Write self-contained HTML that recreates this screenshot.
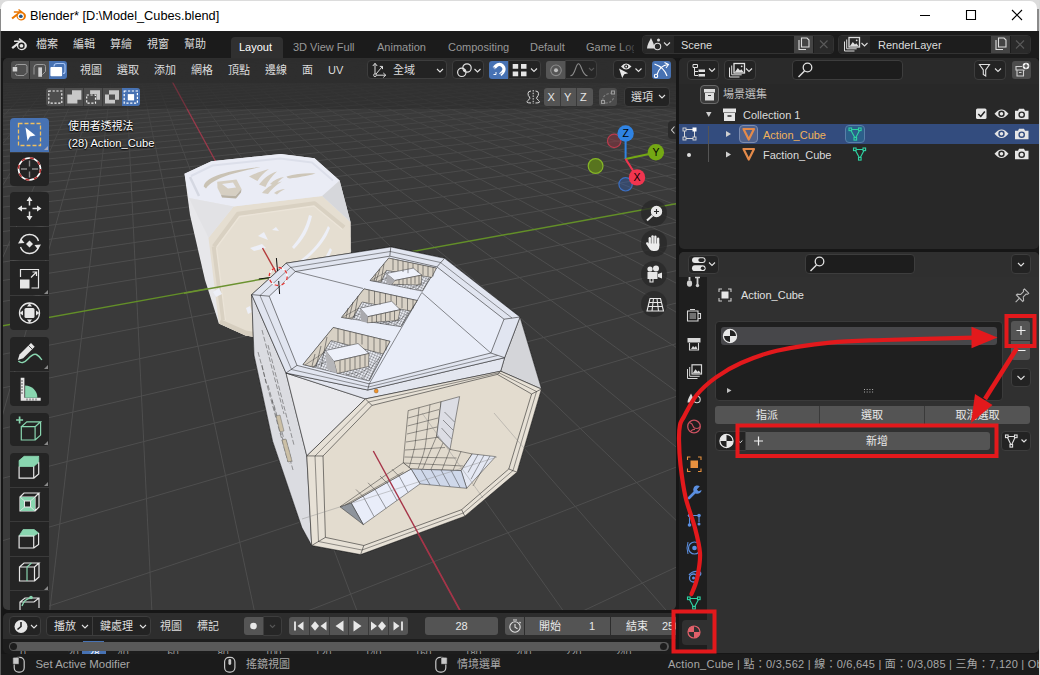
<!DOCTYPE html>
<html lang="zh-Hant"><head><meta charset="utf-8"><title>Blender</title>
<style>
*{box-sizing:border-box;margin:0;padding:0}
html,body{width:1040px;height:675px;overflow:hidden;background:#161616}
body{position:relative;font-family:"Liberation Sans","Noto Sans CJK TC",sans-serif;font-size:11px;color:#e0e0e0;line-height:1}
.abs{position:absolute}
.t{position:absolute;white-space:nowrap;color:#dcdcdc;font-size:11px;line-height:14px}
.cj{font-size:11px}
svg{position:absolute;overflow:visible}
#title{left:1px;top:1px;width:1036px;height:30px;background:#fff;border-radius:7px 7px 0 0}
#topbar{left:0;top:31px;width:1040px;height:27px;background:#1b1b1b}
#vp{left:3px;top:57.500px;width:673px;height:552.500px;background:#3a3a3a;overflow:hidden;border-radius:5px}
#vphead{left:0;top:0;width:673px;height:26px;background:rgba(40,40,40,.72)}
#tl{left:3px;top:613px;width:673px;height:41px;background:#1d1d1d;overflow:hidden;border-radius:5px}
#tlhead{left:0;top:0;width:673px;height:25px;background:#2e2e2e}
#status{left:0;top:654px;width:1040px;height:21px;background:#1b1b1b}
#outl{left:679px;top:58px;width:360px;height:190.500px;background:#282828;overflow:hidden;border-radius:5px}
#outlheadx{left:0;top:0;width:356px;height:25px;background:#2e2e2e}
#props{left:679px;top:252px;width:360px;height:401px;background:#303030;overflow:hidden;border-radius:5px}
#propshead{left:0;top:0;width:356px;height:26px;background:#2e2e2e}
#ptabs{left:0;top:26px;width:28px;height:374px;background:#1d1d1d}
.btn{position:absolute;background:#545454;border-radius:3px}
.fld{position:absolute;background:#1d1d1d;border:1px solid #3d3d3d;border-radius:4px}
.tool{position:absolute;left:6px;width:34px;height:34px;background:rgba(34,34,34,.9);}
</style></head><body>
<!-- TITLE BAR -->
<div class="abs" style="left:0;top:0;width:1040px;height:9px;background:#dcdcdc"></div>
<div class="abs" style="left:0;top:9px;width:1040px;height:22px;background:#8a8a8a"></div>
<div class="abs" id="title">
<svg style="left:8.500px;top:6.500px" width="16.500" height="14.700" viewBox="0 0 18 16"><path d="M1.5 10.500L8.500 5.200H4.200V3.600H10.600L8.800 2.200L9.800 1L16 5.800C17.600 7.200 17.800 9.600 16.600 11.400C15 13.600 11.600 14.200 9.200 12.600C7.900 11.700 7.200 10.400 7.100 9L3 12.200Z" fill="#ea7600"/><circle cx="11.800" cy="9" r="3.300" fill="#fff"/><circle cx="11.800" cy="9" r="2" fill="#265787"/></svg>
<div class="t" style="left:29px;top:7px;font-size:12.750px;color:#000;line-height:16px">Blender* [D:\Model_Cubes.blend]</div>
<svg style="left:918px;top:8px" width="110" height="14" viewBox="0 0 110 14" fill="none" stroke="#000" stroke-width="1.100"><path d="M1 6.500h10M47.500 1.500h9v9h-9zM93 1l10 10M103 1l-10 10"/></svg>
</div>
<div class="abs" style="left:0;top:31px;width:1px;height:644px;background:#5a5a5a;z-index:5"></div>
<div class="abs" style="left:1039px;top:0;width:1px;height:675px;background:#dadada;z-index:5"></div>
<!-- TOP BAR -->
<div class="abs" id="topbar">
<svg style="left:10px;top:5.500px" width="17.500" height="15.600" viewBox="0 0 18 16"><path d="M1.500 10.500L8.500 5.200H4.200V3.600H10.600L8.800 2.200L9.800 1L16 5.800C17.600 7.200 17.800 9.600 16.600 11.400C15 13.600 11.600 14.200 9.200 12.600C7.900 11.700 7.200 10.400 7.100 9L3 12.200Z" fill="#e4e4e4"/><circle cx="11.800" cy="9" r="3.300" fill="#1b1b1b"/><circle cx="11.800" cy="9" r="1.900" fill="#e4e4e4"/></svg>
<div class="t cj" style="left:36px;top:6px">檔案</div>
<div class="t cj" style="left:73px;top:6px">編輯</div>
<div class="t cj" style="left:110px;top:6px">算繪</div>
<div class="t cj" style="left:147px;top:6px">視窗</div>
<div class="t cj" style="left:184px;top:6px">幫助</div>
<div class="abs" style="left:231px;top:6px;width:52px;height:21px;background:#303030;border-radius:4px 4px 0 0"></div>
<div class="t" style="left:239px;top:9px;color:#fff">Layout</div>
<div class="t" style="left:293px;top:9px;color:#989898">3D View Full</div>
<div class="t" style="left:377px;top:9px;color:#989898">Animation</div>
<div class="t" style="left:448px;top:9px;color:#989898">Compositing</div>
<div class="t" style="left:530px;top:9px;color:#989898">Default</div>
<div class="t" style="left:586px;top:9px;color:#989898;width:48px;overflow:hidden">Game Logic</div>
<div class="abs" style="left:618px;top:4px;width:22px;height:22px;background:linear-gradient(90deg,rgba(27,27,27,0),#1b1b1b)"></div>
<!-- scene widget -->
<div class="abs" style="left:642px;top:3.500px;width:192px;height:19.500px;background:#1d1d1d;border:1px solid #333;border-radius:4px"></div>
<div class="abs" style="left:643px;top:4.500px;width:30.500px;height:17.500px;background:#282828;border-radius:3px 0 0 3px"></div>
<div class="abs" style="left:794px;top:4.500px;width:19px;height:17.500px;background:#444"></div>
<div class="abs" style="left:814px;top:4.500px;width:19px;height:17.500px;background:#2a2a2a;border-radius:0 3px 3px 0"></div>
<div class="t" style="left:681px;top:6.500px">Scene</div>
<div class="abs" style="left:838px;top:4px;width:193px;height:19px;background:#1d1d1d;border:1px solid #333;border-radius:4px"></div>
<div class="abs" style="left:839px;top:5px;width:31px;height:17px;background:#282828;border-radius:3px 0 0 3px"></div>
<div class="abs" style="left:991px;top:5px;width:19px;height:17px;background:#444"></div>
<div class="abs" style="left:1011px;top:5px;width:19px;height:17px;background:#2a2a2a;border-radius:0 3px 3px 0"></div>
<div class="t" style="left:878px;top:6.500px">RenderLayer</div>
<svg style="left:0;top:0" width="1040" height="27" viewBox="0 0 1040 27" fill="none" stroke="#dcdcdc" stroke-width="1.100">
<!-- scene icon -->
<path d="M647 17.500c0-3.500 2.200-7 4-10.500c1.800 3.500 3.500 7 3.500 10.500z" fill="#dcdcdc" stroke="none"/><circle cx="657.500" cy="15.500" r="3.200"/><circle cx="658.500" cy="9" r="1.500" fill="#dcdcdc" stroke="none"/><path d="M664 11.500l3 3l3-3"/>
<!-- copy icons -->
<path d="M799 9v9.500h7M801.500 7h5.500l2 2v7h-7.500z"/>
<path d="M996 9v9.500h7M998.500 7h5.500l2 2v7h-7.500z"/>
<path d="M820 9.500l7.500 7.500M827.500 9.500l-7.500 7.500" stroke="#5a5a5a"/>
<path d="M1016 9.500l8 8M1024 9.500l-8 8" stroke="#5a5a5a"/>
<!-- render layer icon -->
<path d="M844.500 10.500v9.500h10M846.700 8.500v9.300h10" stroke-width="1"/><rect x="849" y="6.500" width="10.500" height="9.500" fill="#282828" stroke="#dcdcdc" stroke-width="1.300"/><path d="M849.800 15.300l3-4.300l2.200 2.600l1.300-1.300l2.400 3z" fill="#dcdcdc" stroke="none"/><circle cx="856.700" cy="9.300" r="0.900" fill="#dcdcdc" stroke="none"/>
<path d="M861.500 12l3 3l3-3"/>
</svg>
</div>
<div class="abs" id="vp">
<svg style="left:-3px;top:-57.500px" width="1040" height="675" viewBox="0 0 1040 675">
<defs><linearGradient id="gf" x1="0" y1="58" x2="0" y2="330" gradientUnits="userSpaceOnUse"><stop offset="0" stop-color="#fff" stop-opacity="0"/><stop offset="0.08" stop-color="#fff" stop-opacity="0.05"/><stop offset="0.2" stop-color="#fff" stop-opacity="0.5"/><stop offset="0.4" stop-color="#fff" stop-opacity="0.85"/><stop offset="0.7" stop-color="#fff" stop-opacity="1"/></linearGradient><mask id="gm" maskUnits="userSpaceOnUse" x="0" y="0" width="1040" height="675"><rect x="0" y="0" width="1040" height="675" fill="url(#gf)"/></mask><clipPath id="axc"><rect x="0" y="82.5" width="1040" height="600"/></clipPath></defs>
<g mask="url(#gm)"><path d="M-107557.5 12366.9L27.7 -0.3M-105658.6 12352.3L29.4 -0.3M-103759.7 12337.7L31.0 -0.3M-101860.8 12323.2L32.7 -0.4M-99961.8 12308.6L34.3 -0.4M-98062.9 12294.1L36.0 -0.4M-96164.0 12279.5L37.7 -0.4M-94265.1 12265.0L39.3 -0.4M-92366.2 12250.4L41.0 -0.4M-90467.3 12235.8L42.6 -0.4M-88568.4 12221.3L44.3 -0.4M-86669.5 12206.7L46.0 -0.5M-84770.6 12192.2L47.6 -0.5M-82871.7 12177.6L49.3 -0.5M-80972.8 12163.1L50.9 -0.5M-79073.9 12148.5L52.6 -0.5M-77175.0 12133.9L54.3 -0.5M-75276.1 12119.4L55.9 -0.5M-73377.2 12104.8L57.6 -0.5M-71478.3 12090.3L59.2 -0.6M-69579.4 12075.7L60.9 -0.6M-67680.5 12061.2L62.6 -0.6M-65781.6 12046.6L64.2 -0.6M-63882.7 12032.0L65.9 -0.6M-61983.8 12017.5L67.5 -0.6M-60084.9 12002.9L69.2 -0.6M-58186.0 11988.4L70.9 -0.6M-56287.0 11973.8L72.5 -0.7M-54388.1 11959.3L74.2 -0.7M-52489.2 11944.7L75.8 -0.7M-50590.3 11930.1L77.5 -0.7M-48691.4 11915.6L79.2 -0.7M-46792.5 11901.0L80.8 -0.7M-44893.6 11886.5L82.5 -0.7M-42994.7 11871.9L84.1 -0.7M-41095.8 11857.4L85.8 -0.8M-39196.9 11842.8L87.5 -0.8M-37298.0 11828.3L89.1 -0.8M-35399.1 11813.7L90.8 -0.8M-33500.2 11799.1L92.4 -0.8M-31601.3 11784.6L94.1 -0.8M-29702.4 11770.0L95.8 -0.8M-27803.5 11755.5L97.4 -0.8M-25904.6 11740.9L99.1 -0.9M-24005.7 11726.4L100.7 -0.9M-22106.8 11711.8L102.4 -0.9M-20207.9 11697.2L104.1 -0.9M-18309.0 11682.7L105.7 -0.9M-16410.1 11668.1L107.4 -0.9M-14511.2 11653.6L109.0 -0.9M-12612.2 11639.0L110.7 -1.0M-10713.3 11624.5L112.4 -1.0M-8814.4 11609.9L114.0 -1.0M-6915.5 11595.3L115.7 -1.0M-5016.6 11580.8L117.3 -1.0M-3117.7 11566.2L119.0 -1.0M-1218.8 11551.7L120.7 -1.0M680.1 11537.1L122.3 -1.0M2579.0 11522.6L124.0 -1.1M4477.9 11508.0L125.6 -1.1M8275.7 11478.9L129.0 -1.1M10174.6 11464.3L130.6 -1.1M12073.5 11449.8L132.3 -1.1M13972.4 11435.2L133.9 -1.1M15871.3 11420.7L135.6 -1.1M17770.2 11406.1L137.3 -1.2M19669.1 11391.5L138.9 -1.2M21568.0 11377.0L140.6 -1.2M23466.9 11362.4L142.2 -1.2M25365.8 11347.9L143.9 -1.2M27264.7 11333.3L145.6 -1.2M29163.6 11318.8L147.2 -1.2M31062.6 11304.2L148.9 -1.2M32961.5 11289.6L150.5 -1.3M34860.4 11275.1L152.2 -1.3M36759.3 11260.5L153.9 -1.3M38658.2 11246.0L155.5 -1.3M40557.1 11231.4L157.2 -1.3M42456.0 11216.9L158.8 -1.3M44354.9 11202.3L160.5 -1.3M46253.8 11187.8L162.2 -1.3M48152.7 11173.2L163.8 -1.4M50051.6 11158.6L165.5 -1.4M51950.5 11144.1L167.1 -1.4M53849.4 11129.5L168.8 -1.4M55748.3 11115.0L170.5 -1.4M57647.2 11100.4L172.1 -1.4M59546.1 11085.9L173.8 -1.4M61445.0 11071.3L175.4 -1.4M63343.9 11056.7L177.1 -1.5M65242.8 11042.2L178.8 -1.5M67141.7 11027.6L180.4 -1.5M69040.6 11013.1L182.1 -1.5M70939.5 10998.5L183.8 -1.5M72838.4 10984.0L185.4 -1.5M74737.4 10969.4L187.1 -1.5M76636.3 10954.8L188.7 -1.5M78535.2 10940.3L190.4 -1.6M80434.1 10925.7L192.1 -1.6M82333.0 10911.2L193.7 -1.6M84231.9 10896.6L195.4 -1.6M86130.8 10882.1L197.0 -1.6M88029.7 10867.5L198.7 -1.6M89928.6 10852.9L200.4 -1.6M91827.5 10838.4L202.0 -1.7M93726.4 10823.8L203.7 -1.7M95625.3 10809.3L205.3 -1.7M97524.2 10794.7L207.0 -1.7M99423.1 10780.2L208.7 -1.7M101322.0 10765.6L210.3 -1.7M103220.9 10751.0L212.0 -1.7M105119.8 10736.5L213.6 -1.7M107018.7 10721.9L215.3 -1.8M108917.6 10707.4L217.0 -1.8M110816.5 10692.8L218.6 -1.8M112715.4 10678.3L220.3 -1.8M114614.3 10663.7L221.9 -1.8M116513.2 10649.2L223.6 -1.8M118412.2 10634.6L225.3 -1.8M120311.1 10620.0L226.9 -1.8M122210.0 10605.5L228.6 -1.9M124108.9 10590.9L230.2 -1.9M126007.8 10576.4L231.9 -1.9M127906.7 10561.8L233.6 -1.9M129805.6 10547.3L235.2 -1.9M131704.5 10532.7L236.9 -1.9M133603.4 10518.1L238.5 -1.9M135502.3 10503.6L240.2 -1.9M137401.2 10489.0L241.9 -2.0M-1454605.9 42694.1L1088.0 -0.1M-1440440.1 42585.5L1096.2 -0.2M-1426274.3 42476.9L1104.5 -0.3M-1412108.5 42368.3L1112.7 -0.3M-1397942.6 42259.7L1121.0 -0.4M-1383776.8 42151.1L1129.2 -0.5M-1369611.0 42042.5L1137.5 -0.5M-1355445.2 41933.9L1145.8 -0.6M-1341279.3 41825.3L1154.0 -0.7M-1327113.5 41716.7L1162.3 -0.7M-1312947.7 41608.1L1170.5 -0.8M-1298781.9 41499.5L1178.8 -0.8M-1284616.0 41391.0L1187.1 -0.9M-1270450.2 41282.4L1195.3 -1.0M-1256284.4 41173.8L1203.6 -1.0M-1242118.6 41065.2L1211.8 -1.1M-1227952.7 40956.6L1220.1 -1.2M-1213786.9 40848.0L1228.3 -1.2M-1199621.1 40739.4L1236.6 -1.3M-1185455.3 40630.8L1244.9 -1.4M-1171289.4 40522.2L1253.1 -1.4M-1157123.6 40413.6L1261.4 -1.5M-1142957.8 40305.0L1269.6 -1.5M-1128792.0 40196.4L1277.9 -1.6M-1114626.1 40087.8L1286.2 -1.7M-1100460.3 39979.2L1294.4 -1.7M-1086294.5 39870.6L1302.7 -1.8M-1072128.7 39762.0L1310.9 -1.9M-1057962.8 39653.5L1319.2 -1.9M-1043797.0 39544.9L1327.4 -2.0M-1029631.2 39436.3L1335.7 -2.0M-1015465.4 39327.7L1344.0 -2.1M-1001299.5 39219.1L1352.2 -2.2M-987133.7 39110.5L1360.5 -2.2M-972967.9 39001.9L1368.7 -2.3M-958802.1 38893.3L1377.0 -2.4M-944636.2 38784.7L1385.3 -2.4M-930470.4 38676.1L1393.5 -2.5M-916304.6 38567.5L1401.8 -2.6M-902138.8 38458.9L1410.0 -2.6M-887972.9 38350.3L1418.3 -2.7M-873807.1 38241.7L1426.6 -2.7M-859641.3 38133.1L1434.8 -2.8M-845475.5 38024.5L1443.1 -2.9M-831309.6 37916.0L1451.3 -2.9M-817143.8 37807.4L1459.6 -3.0M-802978.0 37698.8L1467.8 -3.1M-788812.2 37590.2L1476.1 -3.1M-774646.3 37481.6L1484.4 -3.2M-760480.5 37373.0L1492.6 -3.2M-746314.7 37264.4L1500.9 -3.3M-732148.9 37155.8L1509.1 -3.4M-717983.0 37047.2L1517.4 -3.4M-703817.2 36938.6L1525.7 -3.5M-689651.4 36830.0L1533.9 -3.6M-675485.6 36721.4L1542.2 -3.6M-661319.7 36612.8L1550.4 -3.7M-647153.9 36504.2L1558.7 -3.8M-632988.1 36395.6L1566.9 -3.8M-618822.3 36287.1L1575.2 -3.9M-604656.4 36178.5L1583.5 -3.9M-590490.6 36069.9L1591.7 -4.0M-576324.8 35961.3L1600.0 -4.1M-562159.0 35852.7L1608.2 -4.1M-547993.1 35744.1L1616.5 -4.2M-533827.3 35635.5L1624.8 -4.3M-519661.5 35526.9L1633.0 -4.3M-505495.7 35418.3L1641.3 -4.4M-491329.8 35309.7L1649.5 -4.5M-477164.0 35201.1L1657.8 -4.5M-462998.2 35092.5L1666.1 -4.6M-448832.4 34983.9L1674.3 -4.6M-434666.6 34875.3L1682.6 -4.7M-420500.7 34766.7L1690.8 -4.8M-406334.9 34658.1L1699.1 -4.8M-392169.1 34549.6L1707.3 -4.9M-378003.3 34441.0L1715.6 -5.0M-363837.4 34332.4L1723.9 -5.0M-349671.6 34223.8L1732.1 -5.1M-335505.8 34115.2L1740.4 -5.1M-321340.0 34006.6L1748.6 -5.2M-307174.1 33898.0L1756.9 -5.3M-293008.3 33789.4L1765.2 -5.3M-278842.5 33680.8L1773.4 -5.4M-264676.7 33572.2L1781.7 -5.5M-250510.8 33463.6L1789.9 -5.5M-236345.0 33355.0L1798.2 -5.6M-222179.2 33246.4L1806.4 -5.7M-208013.4 33137.8L1814.7 -5.7M-193847.5 33029.2L1823.0 -5.8M-165515.9 32812.1L1839.5 -5.9M-151350.1 32703.5L1847.7 -6.0M-137184.2 32594.9L1856.0 -6.0M-123018.4 32486.3L1864.3 -6.1M-108852.6 32377.7L1872.5 -6.2M-94686.8 32269.1L1880.8 -6.2M-80520.9 32160.5L1889.0 -6.3M-66355.1 32051.9L1897.3 -6.4M-52189.3 31943.3L1905.6 -6.4M-38023.5 31834.7L1913.8 -6.5M-23857.6 31726.1L1922.1 -6.5M-9691.8 31617.5L1930.3 -6.6M4474.0 31508.9L1938.6 -6.7" stroke="#4e4e4e" stroke-width="1" fill="none"/></g>
<path d="M7419.3 13410.9L127.1 -1.4" stroke="#98394a" stroke-width="1.3" clip-path="url(#axc)" fill="none"/>
<path d="M-209951.5 38411.6L1837.5 -7.0" stroke="#638f28" stroke-width="1.4" fill="none"/>
<!-- back cube -->
<g stroke-linejoin="round">
<polygon points="184.5,173.7 211.4,161.2 280.8,153.9 314.5,158.3 339.6,180.5 350.5,222 351,300 300,345 245.5,335.4 218.9,323.6 205,280 190,215" fill="#e7e7ea"/>
<polygon points="208.5,237.7 233.6,206.5 322.2,195.9 350.5,222 351,300 300,345 245.5,335.4 218.9,323.6" fill="#e5ded1"/>
<polygon points="184.5,173.7 211.4,161.2 280.8,153.9 314.5,158.3 339.6,180.5 322.2,195.9 233.6,206.5 189,198" fill="#eaecf5"/>
<polygon points="339.6,180.5 322.2,195.9 350.5,222" fill="#d6d7db"/>
<polygon points="189,198 233.6,206.5 208.5,237.7" fill="#e2e2e5"/>
<polyline points="214,246.500 238,214 314.500,203.500 344,227.500" fill="none" stroke="#d9d1c2" stroke-width="4.600"/><polyline points="216.500,247.500 239.500,216.500 314,206 342.500,229.500" fill="none" stroke="#ebe4d8" stroke-width="1.300"/>
<polyline points="214,246.500 223.500,320" fill="none" stroke="#d9d1c2" stroke-width="4.600"/><polyline points="216.500,247.500 225.500,320" fill="none" stroke="#ebe4d8" stroke-width="1.300"/><polygon points="218.900,323.600 245.500,335.400 300,345 300,340 246,330.500 221,319.500" fill="#d6cebf"/>
<polyline points="191,176 212.5,165.5 280,158.5 312,162.5 333,180.5" fill="none" stroke="#dcdfea" stroke-width="2"/>
<polyline points="190,177 199,196" fill="none" stroke="#d5d8e2" stroke-width="2.5"/>
<!-- emblem top -->
<path d="M203.700 186.500C205 178 222 171 260.600 167C238 172 214 177 206 188.500Z" fill="#c9c2b4"/>
<path d="M217.200 181.800L236.500 179.500L241.500 189L235.500 196L221 195L217.500 188Z" fill="#d6cfc2"/>
<path d="M222 184L233 182.500L236 187.500L228 188.500Z" fill="#eaecf5"/>
<path d="M221 195L235.500 196L241.500 189L241 192.500L236 198.500L222 197.500Z" fill="#b9b2a4"/>
<path d="M249 176.500C256 173 263 170.500 269 169C264 172.500 260 176.500 257.500 181ZM259 184.500C264 178 270 173.500 277 171.500C272 176 268 181 265.500 187ZM262 193C267 187 274 183 282 181.500C276 185 271 189.500 268 194ZM270 184C274 180 279 177.500 284 177C280 179.500 277 182.500 275 186ZM274 193C278 190 282 189 285 189C282 190.500 279 192.500 277 194.500Z" fill="#d3ccbf"/>
<path d="M286.500 176.500C296 173.500 307 173 315.500 173.500C307 176 297 177.500 290 178.500Q287 178.500 286.500 176.500Z" fill="#cdc6b8"/>
<!-- emblem front -->
<path d="M292 247C300 238 306 228 309 215L312 216C309 230 303 240 294 249ZM298 262C312 252 322 240 328 226L330 228C325 242 314 254 300 264ZM296 282C312 274 324 262 330 248L332 250C326 266 312 278 298 285Z" fill="#edeff7"/>
<path d="M250 248L262 244L266 248L254 251ZM258 236L264 232L268 240ZM272 230L276 227L279 231Z" fill="#edeff7"/>
<path d="M213 292L219 288L222 294L216 297ZM246 308L250 306 252 312 248 314Z" fill="#edeff7"/>
</g>
<!-- axis lines over back cube -->
<path d="M262.5 248L277 274" stroke="#b33a3a" stroke-width="1.4" fill="none"/>
<path d="M184 293.200L270 277.700" stroke="#6b9230" stroke-width="1.400" fill="none"/>
<!-- front cube -->
<g stroke="#1c1c1c" stroke-width="0.55" stroke-linejoin="round">
<polygon points="251.7,294.6 286.2,263.2 390.8,246.9 444.6,258.3 520,317 541.5,389 517,472 465,516 360.6,554.6 311.7,545.5 301.9,527.6 272.6,441.2 254,355" fill="#dddee3"/>
<polygon points="251.7,294.6 286,373 306.8,455.9 311.7,545.5 301.9,527.6 272.6,441.2 254,355" fill="#dbdce1"/>
<polygon points="286,373 365.4,398.9 306.8,455.9" fill="#e9e9ec"/>
<polygon points="520,317 541.5,389 500.7,371.2 504.6,357.7" fill="#d4d5d9"/>
<polygon points="286,373 367.7,390 504.6,357.7 500.7,371.2 365.4,398.9" fill="#e3e6ef"/>
<polygon points="251.7,294.6 286.2,263.2 390.8,246.9 444.6,258.3 520,317 504.6,357.7 367.7,390 286,373" fill="#e1e5f0"/>
<polygon points="269.2,296.2 295.4,271.5 389.8,256.2 436.9,266.9 504,319.2 490.8,353 369.2,383.8 297,365.4" fill="#e9edf8"/>
<path d="M251.7 294.6L269.2 296.2M286.2 263.2L295.4 271.5M390.8 246.9L389.8 256.2M444.6 258.3L436.9 266.9M520 317L504 319.2M504.6 357.7L490.8 353M367.7 390L369.2 383.8M286 373L297 365.4" fill="none"/>
<path d="M260 295.5L290.5 267.5L390.3 251.5L440.5 262.5L512 318M497.5 355.5L368.5 387L291.5 369.5L260 295.5" fill="none" stroke-width="0.45"/>
<!-- face edges on top -->
<path d="M295.4 271.5L363.1 288.5M421.8 292.5L490.8 353M421.8 292.5L369.2 383.8" fill="none" stroke-width="0.5"/>
<!-- front beige -->
<polygon points="365.4,398.9 500.7,371.2 541.4,389.1 517,472.2 464.8,516.2 360.6,554.6 311.7,545.5 306.8,455.9" fill="#e7e1d6"/>
<polygon points="372,405.4 497.4,374.4 531.6,394 508.8,469 461.6,509.7 363.8,545.5 325.4,537.4 323,456" fill="#e3dccf"/>
<path d="M365.4 398.9L372 405.4M500.7 371.2L497.4 374.4M541.4 389.1L531.6 394M517 472.2L508.8 469M464.8 516.2L461.6 509.7M360.6 554.6L363.8 545.5M311.7 545.5L325.4 537.4M306.8 455.9L323 456" fill="none"/>
<path d="M368.5 402L499 372.8L536.5 391.5L513 470.5L463.2 513L362 550L318.5 541.5L315 456Z" fill="none" stroke-width="0.45"/>
</g>

<!-- pockets on top face -->
<defs><pattern id="hx" width="2.600" height="2.600" patternUnits="userSpaceOnUse" patternTransform="rotate(24)"><rect width="2.600" height="2.600" fill="#e9ebf2"/><path d="M0 0H2.600M0 0V2.600" stroke="#26262a" stroke-width="0.500"/></pattern></defs>
<g stroke="#1c1c1c" stroke-width="0.45" stroke-linejoin="round">
<polygon points="388.7,258.1 436.4,268.1 422.6,291.2 370.2,280.5" fill="url(#hx)"/>
<polygon points="388.7,258.1 436.4,268.1 431.8,277.4 386.3,270.4 381,282 370.2,280.5" fill="#d8d1c5"/>
<polygon points="386.3,273.5 413.3,268.1 421.8,275.1 394.8,280.5" fill="#eef1fa"/>
<polygon points="394.8,280.5 421.8,275.1 421,285 391.7,284.3" fill="#d8d1c5"/>
<polygon points="386.3,273.5 394.8,280.5 391.7,284.3 386.3,283.5" fill="#a9a9ad" stroke="none"/>
<polygon points="364,288.9 417.2,300.5 401,326.7 341.6,317.4" fill="url(#hx)"/>
<polygon points="364,288.9 417.2,300.5 410.5,311 362,302 352,319 341.6,317.4" fill="#d8d1c5"/>
<polygon points="360.1,308.2 391.7,301.3 400.2,309.7 367.8,316.7" fill="#eef1fa"/>
<polygon points="367.8,316.7 400.2,309.7 398,320.5 367,322.8" fill="#d8d1c5"/>
<polygon points="360.1,308.2 367.8,316.7 367,322.8 360.9,321.3" fill="#a9a9ad" stroke="none"/>
<polygon points="333.2,327.5 390,341.3 369.2,381 303,364.5" fill="url(#hx)"/>
<polygon points="333.2,327.5 390,341.3 383,354 331,340.5 314,367.2 303,364.5" fill="#d8d1c5"/>
<polygon points="325.5,350.5 358,343.5 369,353.5 334,361.5" fill="#eef1fa"/>
<polygon points="334,361.5 369,353.5 368.5,366.5 337,373.5" fill="#d8d1c5"/>
<polygon points="325.5,350.5 334,361.5 337,373.5 327,369" fill="#b5b5b8" stroke="none"/>
</g>
<path d="M393 259v11M398 260v11M403 261v11M408 262.200v11M413 263.200v5M418 264.300v8M423 265.300v10M428 266.400v10M433 267.400v9M399 280v5M403 279.200v5.500M407 278.400v6M411 277.600v6.500M415 276.800v7M419 276v8M384 264l-3 17M380 269l-4 12M376 274l-2 7M369 290v12.500M374.500 291.200v12.500M380 292.400v12.500M385.500 293.600v9M391 294.800v6M396.500 296v9M402 297.200v11M407.500 298.400v12M413 299.600v9M372 316v6.500M376.500 315v7M381 314v7.500M385.500 313v8M390 312v8M394.500 311v9M358 296l-4 22M353 302l-4 16M348 308l-2 10M338 328.700v13M344 330.200v13.500M350 331.600v13.500M356 333.100v10M362 334.500v10M368 336v14M374 337.500v14.500M380 338.900v14.500M386 340.400v10M340 360.500v12M345 359.300v12M350 358.200v12M355 357v12M360 355.900v12M365 354.700v12M327 337l-6 30M321 346l-5 21M315 354l-3 12" stroke="#2a2a2a" stroke-width="0.5" fill="none"/>
<path d="M372 280l14-8M378 281l9-3M422 291l9-14M416 290l13-12M410 289l12-6M343 317l16-9M350 318l10-4M401 326l9-15M394 325.500l14-13M386 324.500l14-6M380 323.500l10-2M305 365l20-13M312 367l14-5M369 380l14-26M362 379l18-22M354 377l16-10M346 375l12-3" stroke="#333" stroke-width="0.4" fill="none"/>
<!-- Y recess -->
<g stroke="#1c1c1c" stroke-width="0.45" stroke-linejoin="round">
<polygon points="408.2,410.6 441.1,401.7 436.7,436.1 450,449.4 472.2,453.9 461.1,470.6 411.1,469 403.3,462.8 404.4,449.4" fill="#e1dacd"/>
<polygon points="441.1,401.7 459.6,396.6 450,449.4 436.7,436.1" fill="#dcdde4"/>
<polygon points="472.2,453.9 495.6,456.6 466.7,488.3 461.1,470.6" fill="#e4e8f3"/>
<polygon points="411.1,469 461.1,470.6 466.7,488.3 420,483.9" fill="#cfd8ea"/>
<polygon points="411.1,469 420,483.9 363.3,524.6 351.1,502.8" fill="#e9edf9"/>
<polygon points="340,506.800 351.1,502.8 363.3,524.6" fill="#8e949c"/>
<polygon points="403.3,462.8 411.1,469 351.1,502.8 340,506.8" fill="#e1dacd"/>
</g>
<path d="M408 418l31-8.500M407.500 426l30.500-8M407 434l30-7M406 442l33-5M405 450l40-2.500M404.500 457l52 1M403.500 463l60 3M419 407.600l-4 38q-2 10 -6 22M430 404.700l-4 36q-1 12 -8 28M436.700 436l-14 33M443 443l-12 26M450 449.400l-8 20.500M461 451.500l-8 19M444.500 412l10 10M443 420l10 10M441.500 428l10 11M478 454.500l-10 18M484 455.200l-13 24M490 456l-17 30M421 469.300l9 15.500M431 469.600l9 16M441 470l9 16.500M451 470.300l9 17M399 475.800l9 16.500M387 482.500l10 18M375 489.300l11 19M363 496l11 20.500M392 469.200l6.500 6.500M380 476l6.500 6.500M368 482.800l6.500 6.500M356 489.500l6.500 6.500M345.500 504.800l58-33" stroke="#2a2a2a" stroke-width="0.45" fill="none"/>
<circle cx="376.200" cy="391" r="2" fill="#f0932b" stroke="#7a4a10" stroke-width="0.4"/>
<path d="M373.300 451L460.500 611" stroke="#a63448" stroke-width="1.400" fill="none"/>
<path d="M262 330l22 84M258 352l30 110M268 345l26 100M272 400l8 30M280 430l10 34M286 440l6 22M262 365l4 18M268 385l5 18M274 405l5 18M282 432l5 18M288 452l5 18" stroke="#444" stroke-width="0.5" fill="none" stroke-dasharray="5 2"/>
<path d="M276 416l4 16l4-1l-4-16zM282 440l6 22l4-1l-6-22z" fill="#cbbfa6" stroke="#555" stroke-width="0.4"/>
<path d="M302 519L497 457M422 413L483 498M494 413L524 448" stroke="#8a8a8a" stroke-width="0.6" fill="none" opacity="0.7"/>
<g fill="none">
<circle cx="278.200" cy="276.500" r="9" stroke="#fff" stroke-width="1.300"/>
<circle cx="278.200" cy="276.500" r="9" stroke="#e03030" stroke-width="1.300" stroke-dasharray="3.534 3.534"/>
<path d="M276.400 258L277.500 271M278.700 281L279.600 294M258.800 279L270 277.600" stroke="#111" stroke-width="1"/>
</g>

</svg>
<!-- VIEWPORT OVERLAY UI (page coords via wrapper) -->
<div class="abs" style="left:-3px;top:-57.500px;width:1040px;height:675px">
<div class="abs" style="left:3px;top:57px;width:673px;height:26px;background:rgba(34,34,34,.5)"></div><div class="abs" style="left:3px;top:83px;width:673px;height:26px;background:rgba(34,34,34,.33)"></div>
<!-- mode buttons -->
<div class="abs" style="left:10.700px;top:60.700px;width:18.800px;height:18.500px;background:#4f4f4f;border-radius:3px 0 0 3px"></div>
<div class="abs" style="left:30px;top:60.700px;width:18.500px;height:18.500px;background:#4f4f4f"></div>
<div class="abs" style="left:49px;top:60.700px;width:18px;height:18.500px;background:#4772b3;border-radius:0 3px 3px 0"></div>
<div class="t cj" style="left:80px;top:63px">視圖</div>
<div class="t cj" style="left:117px;top:63px">選取</div>
<div class="t cj" style="left:154px;top:63px">添加</div>
<div class="t cj" style="left:191px;top:63px">網格</div>
<div class="t cj" style="left:228px;top:63px">頂點</div>
<div class="t cj" style="left:265px;top:63px">邊線</div>
<div class="t cj" style="left:302px;top:63px">面</div>
<div class="t" style="left:328px;top:63px">UV</div>
<div class="fld" style="left:367px;top:60px;width:80px;height:19px;background:#232323"></div>
<div class="t cj" style="left:393px;top:63px">全域</div>
<div class="fld" style="left:452px;top:60px;width:32px;height:19px;background:#232323"></div>
<div class="abs" style="left:489px;top:61px;width:19px;height:18px;background:#4772b3;border-radius:3px 0 0 3px"></div>
<div class="fld" style="left:508px;top:60px;width:33px;height:19px;background:#232323;border-radius:0 4px 4px 0"></div>
<div class="abs" style="left:546px;top:61px;width:19px;height:18px;background:#555;border-radius:3px 0 0 3px"></div>
<div class="fld" style="left:565px;top:60px;width:32px;height:19px;background:#262626;border-radius:0 4px 4px 0"></div>
<div class="fld" style="left:613px;top:60px;width:33px;height:19px;background:#232323"></div>
<div class="abs" style="left:652px;top:61px;width:19px;height:18px;background:#4772b3;border-radius:3px"></div>
<!-- row 2 -->
<div class="abs" style="left:46px;top:88px;width:94px;height:18px;background:#4e4e4e;border-radius:3px"></div>
<div class="abs" style="left:64px;top:88px;width:1px;height:18px;background:#3a3a3a"></div>
<div class="abs" style="left:83px;top:88px;width:1px;height:18px;background:#3a3a3a"></div>
<div class="abs" style="left:102px;top:88px;width:1px;height:18px;background:#3a3a3a"></div>
<div class="abs" style="left:121.500px;top:88px;width:18.500px;height:18px;background:#4772b3;border-radius:0 3px 3px 0"></div>
<div class="abs" style="left:544px;top:88px;width:48.500px;height:18px;background:#545454;border-radius:3px"></div>
<div class="abs" style="left:560px;top:88px;width:1px;height:18px;background:#3a3a3a"></div>
<div class="abs" style="left:576px;top:88px;width:1px;height:18px;background:#3a3a3a"></div>
<div class="t" style="left:547.500px;top:90px;color:#e8e8e8">X</div>
<div class="t" style="left:564px;top:90px;color:#e8e8e8">Y</div>
<div class="t" style="left:580px;top:90px;color:#e8e8e8">Z</div>
<div class="abs" style="left:599px;top:88px;width:18px;height:18px;background:#4c4c4c;border-radius:3px"></div>
<div class="fld" style="left:624px;top:87px;width:46px;height:20px;background:#232323"></div>
<div class="t cj" style="left:631px;top:90px">選項</div>
<!-- toolbar -->
<div class="abs" style="left:10px;top:118px;width:39px;height:33.500px;background:#4772b3;border-radius:4px 4px 0 0"></div>
<div class="abs" style="left:10px;top:152.500px;width:39px;height:33px;background:#242424;border-radius:0 0 4px 4px"></div>
<div class="abs" style="left:10px;top:192px;width:39px;height:33.500px;background:#242424;border-radius:4px 4px 0 0"></div>
<div class="abs" style="left:10px;top:226.500px;width:39px;height:33.500px;background:#242424"></div>
<div class="abs" style="left:10px;top:261px;width:39px;height:33.500px;background:#242424"></div>
<div class="abs" style="left:10px;top:295.500px;width:39px;height:34px;background:#242424;border-radius:0 0 4px 4px"></div>
<div class="abs" style="left:10px;top:337px;width:39px;height:33.500px;background:#242424;border-radius:4px 4px 0 0"></div>
<div class="abs" style="left:10px;top:371.500px;width:39px;height:34px;background:#242424;border-radius:0 0 4px 4px"></div>
<div class="abs" style="left:10px;top:413px;width:39px;height:33px;background:#242424;border-radius:4px"></div>
<div class="abs" style="left:10px;top:453px;width:39px;height:33.500px;background:#242424;border-radius:4px 4px 0 0"></div>
<div class="abs" style="left:10px;top:487.500px;width:39px;height:33.500px;background:#242424"></div>
<div class="abs" style="left:10px;top:522px;width:39px;height:33.500px;background:#242424"></div>
<div class="abs" style="left:10px;top:556.500px;width:39px;height:33.500px;background:#242424"></div>
<div class="abs" style="left:10px;top:591px;width:39px;height:25px;background:#242424"></div>
<!-- overlay text -->
<div class="t cj" style="left:68px;top:118px;color:#fff;font-size:10.900px;line-height:16px;text-shadow:0 0 2px #000,0 1px 1px #000">使用者透視法</div>
<div class="t" style="left:68px;top:135px;color:#fff;font-size:11.200px;line-height:16px;text-shadow:0 0 2px #000,0 1px 1px #000">(28) Action_Cube</div>
<!-- nav buttons -->
<div class="abs" style="left:640.600px;top:199.700px;width:26.800px;height:26.800px;border-radius:50%;background:rgba(40,40,40,.75)"></div>
<div class="abs" style="left:640.600px;top:229.900px;width:26.800px;height:26.800px;border-radius:50%;background:rgba(40,40,40,.75)"></div>
<div class="abs" style="left:640.600px;top:260.500px;width:26.800px;height:26.800px;border-radius:50%;background:rgba(40,40,40,.75)"></div>
<div class="abs" style="left:640.600px;top:290.700px;width:26.800px;height:26.800px;border-radius:50%;background:rgba(40,40,40,.75)"></div>
<!-- sidebar arrow -->
<div class="abs" style="left:668px;top:121px;width:9px;height:18px;background:#2b2b2b;border-radius:4px 0 0 4px"></div>
<svg style="left:0;top:0" width="1040" height="675" viewBox="0 0 1040 675" fill="none" stroke="#e0e0e0" stroke-width="1.100">
<!-- mode icons -->
<path d="M17.500 64.500h7.500q2 0 2 2v6l-3 3h-6.500q-2 0-2-2" stroke="#9c9c9c" stroke-width="1"/><path d="M15.300 66.500q0-2 2.200-2" stroke="#9c9c9c" stroke-width="1"/><rect x="12.700" y="67" width="4.500" height="4.500" fill="#cfcfcf" stroke="none"/>
<path d="M34 74.500v-7q0-3 3-3h6.500q2 0 2 2v5l-3 3" stroke="#9c9c9c" stroke-width="1"/><rect x="38.300" y="67.400" width="3.700" height="9.400" fill="#cfcfcf" stroke="none"/>
<path d="M54 66.500q0-3 3-3h6q2 0 2 2v6q0 2-2 2" stroke="#a9c6f5" stroke-width="1.100"/><rect x="50.400" y="67" width="11.700" height="9.200" rx="1" fill="#fff" stroke="none"/>
<!-- orientation icon -->
<path d="M375 63.500v11.700h10.500M375 75.200l7.300-8.600M372.800 66l2.200-2.700l2.200 2.700M383.300 73l2.500 2.200l-2.500 2.200M379.800 66.400h2.700v2.700" stroke="#ddd" stroke-width="1"/><circle cx="375" cy="75.200" r="1.400" fill="#232323" stroke="#ddd" stroke-width="0.900"/>
<path d="M437 69l3 3l3-3"/>
<!-- pivot -->
<circle cx="467" cy="68" r="4.200" stroke-width="1.200"/><circle cx="461.800" cy="72.300" r="4.200" stroke-width="1.200"/><circle cx="464.400" cy="70.200" r="1.200" fill="#e0e0e0" stroke="none"/><path d="M474.500 69l3 3l3-3"/>
<!-- snap magnet -->
<path d="M493.800 68.200L496.250 65.750A4.600 4.600 0 0 1 502.750 72.250L500.300 74.700" stroke="#fff" stroke-width="3.400"/>
<path d="M494.600 67.400L497 65M501.100 73.900L503.500 71.500" stroke="#4772b3" stroke-width="0" />
<path d="M493 66.500l3 3M499 75.600l3-3" stroke="#4772b3" stroke-width="1"/>
<path d="M493.500 74.500h2.500v-2.500" stroke="#fff" stroke-width="1"/>
<!-- snap grid -->
<path d="M512.700 64h5.500v4.800h-5.500zM521 64h5.500v4.800h-5.500zM512.700 71.500h5.500v4.800h-5.500zM521 71.500h5.500v4.800h-5.500z" fill="#e6e6e6" stroke="none"/><path d="M531 68.500l3 3l3-3"/>
<!-- proportional -->
<circle cx="556" cy="70.300" r="5.300" stroke="#8a8a8a"/><circle cx="556" cy="70.300" r="2" fill="#bdbdbd" stroke="none"/>
<path d="M570.400 75.800c5 0 5-12 8.100-12s3.500 12 9 12" stroke="#8a8a8a"/><path d="M589 68l2.500 2.500l2.500-2.500" stroke="#555"/>
<!-- visibility -->
<path d="M619 68.500l3.200 9.500l2-3.700l4-1z" fill="#e6e6e6" stroke="none"/><path d="M621 66.500q5-6 10.500 0q-5.500 6-10.500 0z" fill="#e6e6e6" stroke="none"/><circle cx="626.200" cy="66.500" r="2" fill="#232323" stroke="none"/><circle cx="626.200" cy="66.500" r="0.900" fill="#e6e6e6" stroke="none"/><path d="M635.500 68.500l3 3l3-3"/>
<!-- gizmo toggle -->
<path d="M657 74.500c2-6 6-9.500 11-10" stroke="#fff" stroke-width="1.200"/><path d="M654.500 64c6 2 10.500 6 12.500 12" stroke="#fff" stroke-width="1.200"/><circle cx="656" cy="76" r="1.700" fill="#4772b3" stroke="#fff" stroke-width="1.100"/><path d="M664.500 62.500l4 2l-2.500 3.500" stroke="#fff" stroke-width="1.100"/>
<!-- select mode icons -->
<rect x="48.800" y="91" width="13" height="12.200" stroke="#f0f0f0" stroke-dasharray="2.200 1.600" stroke-width="1.200"/>
<path d="M72 90.300h9.400v9.400h-4v3.700h-10.100v-9h4.700z" fill="#c8c8c8" stroke="none"/>
<path d="M90.100 90.300h9.900v9.400h-3.500v-5.800h-6.400z" fill="#c8c8c8" stroke="none"/><rect x="86.700" y="95" width="8.800" height="8.200" stroke="#f0f0f0" stroke-dasharray="2.200 1.600" stroke-width="1.200"/>
<path d="M109 90.300h10v9.400h-4v-5.300h-6zM105 94.400h4v5.300h6v3.700h-10z" fill="#c8c8c8" stroke="none"/>
<rect x="124.200" y="91" width="13.200" height="12.200" stroke="#fff" stroke-dasharray="2.200 1.600" stroke-width="1.200"/><rect x="127.800" y="94.100" width="6.300" height="6.300" fill="#fff" stroke="none"/>
<!-- mirror icon -->
<path d="M531 91q-3 0-3 2.500t1.500 3.500t-1.500 3.500t3 2.500M535.500 91q3 0 3 2.500t-1.500 3.500t1.500 3.500t-3 2.500" stroke="#ddd" stroke-width="1"/><path d="M533.200 90v14" stroke="#ddd" stroke-width="1" stroke-dasharray="1.500 1.200"/>
<!-- automerge -->
<path d="M603 101q-1-7 9-8" stroke="#7d7d7d" stroke-dasharray="2.500 1.500" stroke-width="1.200"/><path d="M605 103q8 0 9-7" stroke="#7d7d7d" stroke-dasharray="2.500 1.500" stroke-width="1.200"/><rect x="601.500" y="100.500" width="3" height="3" stroke="#9a9a9a"/><rect x="611.500" y="91" width="3" height="3" stroke="#9a9a9a"/>
<path d="M659 95l3 3l3-3"/>
<!-- sidebar arrow -->
<path d="M674.500 126.500l-3 3.500l3 3.500" stroke="#ccc"/>
<!-- TOOLS -->
<!-- select box -->
<rect x="18.500" y="123.500" width="22" height="22" stroke="#f0c060" stroke-dasharray="4 2" stroke-width="1.300"/>
<path d="M25.500 127.500l10 8l-5.500 1l-2.500 4.500z" fill="#fff" stroke="none"/>
<path d="M48 146v4h-4z" fill="#aab" stroke="none"/>
<!-- cursor -->
<circle cx="29.500" cy="169" r="11" stroke="#fff" stroke-width="1.600"/><circle cx="29.500" cy="169" r="11" stroke="#b03030" stroke-width="1.600" stroke-dasharray="4 4.640"/>
<path d="M29.500 160.500v6M29.500 171.500v6M21 169h6M32 169h6" stroke="#8a8a8a" stroke-width="1.400"/>
<!-- move -->
<path d="M29.500 199v19M20 208.500h19" stroke="#e6e6e6" stroke-width="1.500" stroke-dasharray="6.500 6"/>
<path d="M29.500 196.500l3 4.500h-6zM29.500 220.500l3-4.500h-6zM17.500 208.500l4.500-3v6zM41.500 208.500l-4.500-3v6z" fill="#e6e6e6" stroke="none"/>
<!-- rotate -->
<path d="M20.500 241a9.500 9.500 0 0 1 18 0M38.500 247a9.500 9.500 0 0 1-18 0" stroke="#e6e6e6" stroke-width="1.400"/>
<path d="M18 243.500l3-5l3.500 4.500zM41 244.500l-3 5l-3.500-4.500z" fill="#e6e6e6" stroke="none"/><path d="M29.500 240.500l3.500 3.500l-3.500 3.500l-3.500-3.500z" fill="#e6e6e6" stroke="none"/>
<!-- scale -->
<rect x="20" y="279.500" width="9.500" height="9" fill="#e6e6e6" stroke="none"/><path d="M20.500 277v-7.500h18v18.500h-7" stroke="#e6e6e6" stroke-width="1.200"/><path d="M31 277.500l5.500-5.500M32.500 272h4v4" stroke="#e6e6e6" stroke-width="1.200"/>
<path d="M48 290v4h-4z" fill="#888" stroke="none"/>
<!-- transform -->
<circle cx="29.500" cy="313" r="10" stroke="#e6e6e6" stroke-width="1.300"/><rect x="24.500" y="308" width="10" height="10" rx="1.500" fill="#e6e6e6" stroke="none"/>
<path d="M29.500 303l2.500 3.500h-5zM29.500 323l2.500-3.500h-5zM19.500 313l3.500-2.500v5zM39.500 313l-3.500-2.500v5z" fill="#e6e6e6" stroke="none"/>
<!-- annotate -->
<path d="M18.400 361q4 4 9.500-2t8.500-4.500t5.500 5.500" stroke="#89d6b0" stroke-width="1.400"/><path d="M19.500 354.500l11.500-11.500l3.700 3.700l-11.500 11.500l-5.400 1.800z" fill="#e6e6e6" stroke="none"/><path d="M28.500 345.500l3.700 3.700" stroke="#242424" stroke-width="0.800"/>
<path d="M48 365v4h-4z" fill="#888" stroke="none"/>
<!-- measure -->
<path d="M20.700 377.800h3.700v20h16.300v3h-20z" fill="#e6e6e6" stroke="none"/><path d="M21 381h2M21 384h2M21 387h2M21 390h2M21 393h2M27 398.500v2M30 398.500v2M33 398.500v2M36 398.500v2" stroke="#242424" stroke-width="0.700"/><path d="M25.100 397.800v-12.300a12.300 12.300 0 0 1 12.300 12.300z" fill="#89d6b0" stroke="none"/>
<!-- add cube -->
<path d="M21.300 426.700h13.800v13.300h-13.800zM21.300 426.700l5.500-4.900h13.800l-5.500 4.900M40.600 421.800v13.300l-5.500 4.900" stroke="#89d6b0" stroke-width="1.200"/><path d="M19.600 416.500v7M16.100 420h7" stroke="#89d6b0" stroke-width="1.700"/>
<path d="M48 441v4h-4z" fill="#888" stroke="none"/>
<!-- extrude -->
<path d="M19.100 460.500l5-4.200h14.600l-5 4.200zM19.100 460.500h14.600v6h-14.600zM33.700 460.500l5-4.200v6l-5 4.200z" fill="#89d6b0" stroke="#89d6b0" stroke-width="0.800"/><path d="M19.100 466.500v11.700h14.600v-11.700M33.700 478.200l5-4.200v-11.700" stroke="#e6e6e6" stroke-width="1.200"/>
<path d="M48 482v4h-4z" fill="#888" stroke="none"/>
<!-- inset -->
<path d="M20 497h15v14h-15zM35 497l4-4h-15l-4 4M35 511l4-4v-14" stroke="#e6e6e6" stroke-width="1.200"/><path d="M20 497h15v14h-15z" fill="#89d6b0" stroke="none"/><rect x="24.500" y="501" width="6" height="6" fill="#242424" stroke="#e6e6e6" stroke-width="1"/><path d="M20 497l4.500 4M35 497l-4.500 4M20 511l4.500-4M35 511l-4.500-4" stroke="#e6e6e6" stroke-width="0.800"/>
<!-- bevel -->
<path d="M19.100 536l4-6.500h11l4.500 3.500l-4.900 3z" fill="#89d6b0" stroke="#89d6b0" stroke-width="0.800"/><path d="M19.100 536v12h14.600v-12zM33.700 548l4.900-3.500v-11.500" stroke="#e6e6e6" stroke-width="1.200"/>
<!-- loop cut -->
<path d="M19.500 567v14h15v-14zM19.500 567l4.500-4h15l-4.500 4M34.500 581l4.500-4v-14" stroke="#e6e6e6" stroke-width="1.200"/><path d="M27 581v-14l4.500-4" stroke="#89d6b0" stroke-width="1.200"/>
<path d="M48 586v4h-4z" fill="#888" stroke="none"/>
<!-- knife -->
<path d="M20 610v-8l5-4h14v10M20 602h14l5-4" stroke="#e6e6e6" stroke-width="1.200"/><path d="M22 606q2-7 9-8" stroke="#89d6b0" stroke-width="1.300"/><circle cx="31" cy="597.500" r="1.800" fill="#89d6b0" stroke="none"/>
<!-- GIZMO -->
<path d="M625.600 158.900L625.600 140" stroke="#2f83e3" stroke-width="2"/><path d="M625.600 158.900L649 154" stroke="#74a814" stroke-width="2"/><path d="M625.600 158.900L633.500 171.500" stroke="#f0354f" stroke-width="2"/>
<circle cx="614.200" cy="140.900" r="6.700" fill="rgba(200,50,70,.3)" stroke="#b93a4c" stroke-width="1.200"/>
<circle cx="595.600" cy="166" r="7.400" fill="#58741f" stroke="#85b626" stroke-width="1.200"/>
<circle cx="625.600" cy="184.300" r="6.700" fill="rgba(50,110,220,.3)" stroke="#3b6fc2" stroke-width="1.200"/>
<circle cx="625.600" cy="133.500" r="8.200" fill="#2f83e3" stroke="none"/>
<circle cx="655.900" cy="152.300" r="8.200" fill="#74a814" stroke="none"/>
<circle cx="637" cy="177.400" r="8.200" fill="#f0354f" stroke="none"/>
<!-- nav icons -->
<circle cx="656.500" cy="211.500" r="5" stroke="#e8e8e8" stroke-width="1.400" fill="#e8e8e8"/><path d="M652.500 215.500l-5.500 5" stroke="#e8e8e8" stroke-width="2"/><path d="M654 211.500h5M656.500 209v5" stroke="#2a2a2a" stroke-width="1.100"/>
<g fill="#ececec" stroke="none"><rect x="648.600" y="237" width="2.300" height="9" rx="1.150"/><rect x="651.400" y="235.200" width="2.300" height="10" rx="1.150"/><rect x="654.200" y="235.600" width="2.300" height="10" rx="1.150"/><rect x="657" y="237.600" width="2.300" height="9" rx="1.150"/><path d="M648.600 243.500h10.700v3q0 4.500-4.500 4.500h-1.500q-2.500 0-3.800-2l-3.300-5q-.6-1.200.5-1.700t1.900.7z"/></g>
<path d="M647.500 272h10v7h-10zM658 274l4-1.500v6l-4-1.500z" fill="#e8e8e8" stroke="none"/><circle cx="650" cy="269" r="2.600" fill="#e8e8e8" stroke="none"/><circle cx="656" cy="268.500" r="3" fill="#e8e8e8" stroke="none"/><path d="M650 279v3h3v-3" stroke="#e8e8e8"/>
<path d="M650 298.500h10.500l3 12.500h-16.500zM653.500 298.500l-1.500 12.500M657 298.500l1.500 12.500M649.200 302.500h12.300M648.200 306.500h14.300" stroke="#e8e8e8" stroke-width="1.100"/>
<g font-family="Liberation Sans, sans-serif" font-size="10.500" fill="#000" stroke="none" text-anchor="middle"><text x="625.600" y="137.300">Z</text><text x="655.900" y="156.100">Y</text><text x="637" y="181.200">X</text></g>

</svg>
</div>
</div>
<!-- TIMELINE -->
<div class="abs" id="tl"><div class="abs" style="left:-3px;top:-613px;width:1040px;height:675px">
<div class="abs" style="left:3px;top:613px;width:673px;height:26px;background:#2d2d2d"></div>
<div class="fld" style="left:9px;top:616px;width:32px;height:20px;background:#232323"></div>
<div class="fld" style="left:46px;top:616px;width:105px;height:20px;background:#232323"></div>
<div class="abs" style="left:92px;top:617px;width:1px;height:18px;background:#3d3d3d"></div>
<div class="t cj" style="left:54px;top:619px">播放</div>
<div class="t cj" style="left:100px;top:619px">鍵處理</div>
<div class="t cj" style="left:160px;top:619px">視圖</div>
<div class="t cj" style="left:197px;top:619px">標記</div>
<div class="abs" style="left:244px;top:617px;width:19px;height:18px;background:#555;border-radius:3px 0 0 3px"></div>
<div class="fld" style="left:263px;top:616px;width:19px;height:20px;background:#262626;border-radius:0 4px 4px 0"></div>
<div class="abs" style="left:289px;top:617px;width:119px;height:18px;background:#545454;border-radius:3px"></div>
<div class="abs" style="left:308.500px;top:617px;width:1px;height:18px;background:#3a3a3a"></div>
<div class="abs" style="left:328.500px;top:617px;width:1px;height:18px;background:#3a3a3a"></div>
<div class="abs" style="left:348px;top:617px;width:1px;height:18px;background:#3a3a3a"></div>
<div class="abs" style="left:368px;top:617px;width:1px;height:18px;background:#3a3a3a"></div>
<div class="abs" style="left:388px;top:617px;width:1px;height:18px;background:#3a3a3a"></div>
<div class="abs" style="left:425px;top:617px;width:73px;height:18px;background:#545454;border-radius:3px"></div>
<div class="t" style="left:425px;top:619px;width:73px;text-align:center;color:#e8e8e8">28</div>
<div class="abs" style="left:505px;top:617px;width:19px;height:18px;background:#545454;border-radius:3px 0 0 3px"></div>
<div class="abs" style="left:525px;top:617px;width:85px;height:18px;background:#545454"></div>
<div class="abs" style="left:611px;top:617px;width:70px;height:18px;background:#545454"></div>
<div class="t cj" style="left:539px;top:619px;color:#e8e8e8">開始</div>
<div class="t" style="left:589px;top:619px;color:#e8e8e8">1</div>
<div class="t cj" style="left:626px;top:619px;color:#e8e8e8">結束</div>
<div class="t" style="left:662px;top:619px;color:#e8e8e8">250</div>
<!-- frame numbers -->
<div class="t" style="left:8.0px;top:646.500px;width:30px;text-align:center;font-size:10px;color:#9a9a9a">0</div><div class="t" style="left:58.0px;top:646.500px;width:30px;text-align:center;font-size:10px;color:#9a9a9a">20</div><div class="t" style="left:108.0px;top:646.500px;width:30px;text-align:center;font-size:10px;color:#9a9a9a">40</div><div class="t" style="left:158.0px;top:646.500px;width:30px;text-align:center;font-size:10px;color:#9a9a9a">60</div><div class="t" style="left:208.0px;top:646.500px;width:30px;text-align:center;font-size:10px;color:#9a9a9a">80</div><div class="t" style="left:258.0px;top:646.500px;width:30px;text-align:center;font-size:10px;color:#9a9a9a">100</div><div class="t" style="left:308.0px;top:646.500px;width:30px;text-align:center;font-size:10px;color:#9a9a9a">120</div><div class="t" style="left:358.0px;top:646.500px;width:30px;text-align:center;font-size:10px;color:#9a9a9a">140</div><div class="t" style="left:408.0px;top:646.500px;width:30px;text-align:center;font-size:10px;color:#9a9a9a">160</div><div class="t" style="left:458.0px;top:646.500px;width:30px;text-align:center;font-size:10px;color:#9a9a9a">180</div><div class="t" style="left:508.0px;top:646.500px;width:30px;text-align:center;font-size:10px;color:#9a9a9a">200</div><div class="t" style="left:558.0px;top:646.500px;width:30px;text-align:center;font-size:10px;color:#9a9a9a">220</div><div class="t" style="left:608.0px;top:646.500px;width:30px;text-align:center;font-size:10px;color:#9a9a9a">240</div>
<div class="abs" style="left:82px;top:645px;width:24px;height:12px;background:#4772b3;border-radius:2px"></div>
<div class="t" style="left:79px;top:646.500px;width:30px;text-align:center;font-size:10px;color:#fff">28</div>
<div class="abs" style="left:83px;top:641px;width:21px;height:1.500px;background:#4772b3"></div>
<div class="abs" style="left:8.500px;top:642px;width:660px;height:9px;background:#595959;border-radius:5px"></div>
<div class="abs" style="left:10px;top:643px;width:7px;height:7px;background:#1d1d1d;border-radius:50%"></div>
<div class="abs" style="left:660px;top:643px;width:7px;height:7px;background:#1d1d1d;border-radius:50%"></div>
<svg style="left:0;top:0" width="1040" height="675" viewBox="0 0 1040 675" fill="none" stroke="#e0e0e0" stroke-width="1.100">
<circle cx="21" cy="626.500" r="6.500" fill="#e6e6e6" stroke="none"/><path d="M21 622v4.500l-3.500 3" stroke="#232323" stroke-width="1.600"/><path d="M31 625l3 3l3-3"/>
<path d="M82 625l3 3l3-3M140 625l3 3l3-3"/>
<circle cx="253.500" cy="626" r="3.300" fill="#e8e8e8" stroke="none"/><path d="M270 625l2.500 2.500l2.500-2.500" stroke="#555"/>
<path d="M295 621.500v9" stroke="#e8e8e8" stroke-width="1.800"/><path d="M303.500 621.500v9l-6-4.500z" fill="#e8e8e8" stroke="none"/>
<path d="M311 626l4-4.700l4 4.700l-4 4.700z" fill="#e8e8e8" stroke="none"/><path d="M326.500 621.500v9l-6-4.500z" fill="#e8e8e8" stroke="none"/>
<path d="M343.500 620.500v11l-8-5.500z" fill="#e8e8e8" stroke="none"/>
<path d="M353.500 620.500v11l8-5.500z" fill="#e8e8e8" stroke="none"/>
<path d="M378 626l4-4.700l4 4.700l-4 4.700z" fill="#e8e8e8" stroke="none"/><path d="M371 621.500v9l6-4.500z" fill="#e8e8e8" stroke="none"/>
<path d="M402 621.500v9" stroke="#e8e8e8" stroke-width="1.800"/><path d="M393.500 621.500v9l6-4.500z" fill="#e8e8e8" stroke="none"/>
<circle cx="515" cy="627" r="5.200"/><path d="M515 624v3.300l2.500 1.500M513 620h4M519.500 622l1.200 1.200"/>
</svg>
</div></div>
<!-- STATUS BAR -->
<div class="abs" id="status"><div class="abs" style="left:0;top:-2px;width:1040px;height:23px">
<div class="t" style="left:35.500px;top:5px;color:#a8a8a8;font-size:11.400px">Set Active Modifier</div>
<div class="t cj" style="left:246px;top:5px;color:#a8a8a8">搖鏡視圖</div>
<div class="t cj" style="left:457px;top:5px;color:#a8a8a8">情境選單</div>
<div class="t" style="left:668px;top:5px;color:#a8a8a8;letter-spacing:.25px;font-family:'Liberation Sans','Noto Sans CJK TC',sans-serif">Action_Cube | <span class="cj">點</span>：0/3,562 | <span class="cj">線</span>：0/6,645 | <span class="cj">面</span>：0/3,085 | <span class="cj">三角</span>：7,120 | Objects</div>
<svg style="left:0;top:0" width="700" height="23" viewBox="0 0 700 23" fill="none" stroke="#c8c8c8" stroke-width="1.100">
<rect x="14.200" y="5.300" width="10" height="14.800" rx="4.300" stroke-width="1.200"/><path d="M12.800 6.500q0-1.200 1.200-1.200h5v7h-6.200z" fill="#c8c8c8" stroke="#1b1b1b" stroke-width="0.600"/>
<rect x="224.600" y="5.300" width="10.300" height="14.800" rx="4.500" stroke-width="1.200"/><rect x="228.400" y="7" width="2.800" height="6" rx="1.400" fill="#c8c8c8" stroke="none"/>
<rect x="435.800" y="5.300" width="10" height="14.800" rx="4.300" stroke-width="1.200"/><path d="M447.200 6.500q0-1.200-1.200-1.200h-5v7h6.200z" fill="#c8c8c8" stroke="#1b1b1b" stroke-width="0.600"/>
</svg>
</div></div>
<!-- OUTLINER -->
<div class="abs" id="outl"><div class="abs" style="left:-679px;top:-58px;width:1040px;height:675px">
<div class="abs" style="left:679px;top:58px;width:360px;height:26px;background:#2a2a2a"></div>
<div class="fld" style="left:687px;top:60px;width:32px;height:20px;background:#232323"></div>
<div class="fld" style="left:724px;top:60px;width:32px;height:20px;background:#232323"></div>
<div class="fld" style="left:792px;top:60px;width:111px;height:20px;background:#1d1d1d"></div>
<div class="fld" style="left:974px;top:60px;width:32px;height:20px;background:#232323"></div>
<div class="abs" style="left:1012px;top:61px;width:19px;height:18px;background:#4c4c4c;border-radius:3px"></div>
<!-- rows -->
<div class="abs" style="left:679px;top:124px;width:360px;height:20px;background:#334c7e"></div>
<div class="abs" style="left:700px;top:85px;width:18.500px;height:18.500px;border:1px solid #6a6a6a;background:#3a3a3a;border-radius:4px"></div>
<div class="t cj" style="left:723px;top:87px;color:#c0c0c0">場景選集</div>
<div class="t" style="left:743px;top:108px;color:#dcdcdc">Collection 1</div>
<div class="abs" style="left:739px;top:125px;width:19px;height:18px;border:1px solid #7d8db0;background:#50628c;border-radius:4px"></div>
<div class="t" style="left:763px;top:128px;color:#f0b25a">Action_Cube</div>
<div class="abs" style="left:845px;top:125px;width:20px;height:18px;border:1px solid #5a7fa8;background:#2c5f8a;border-radius:4px"></div>
<div class="t" style="left:763px;top:148px;color:#dcdcdc">Faction_Cube</div>
<div class="abs" style="left:708px;top:126px;width:1px;height:36px;background:#555"></div>
<div class="abs" style="left:687px;top:152.500px;width:4px;height:4px;border-radius:50%;background:#e0e0e0"></div>
<svg style="left:0;top:0" width="1040" height="675" viewBox="0 0 1040 675" fill="none" stroke="#e0e0e0" stroke-width="1.100">
<!-- header icons -->
<path d="M693 64.500h4.500v3h-4.500zM694.500 67.500v8h3.500M694.500 71.500h3.500" stroke-width="1"/><path d="M698.500 69.500h6.500v2.500h-6.500zM698.500 74h6.500v2.500h-6.500z" fill="#e0e0e0" stroke="none"/><path d="M709 68.500l3 3l3-3"/>
<path d="M729.500 67.500v9.500h10M731.700 65.500v9.300h10" stroke-width="1"/><rect x="734" y="63.500" width="10.500" height="9.500" fill="#232323" stroke="#e0e0e0" stroke-width="1.300"/><path d="M734.800 72.300l3-4.300l2.200 2.600l1.300-1.300l2.400 3z" fill="#e0e0e0" stroke="none"/><circle cx="741.700" cy="66.300" r="0.900" fill="#e0e0e0" stroke="none"/><path d="M746 68.500l3 3l3-3"/>
<circle cx="807.500" cy="67.500" r="4.300" stroke-width="1.300"/><path d="M804.500 71l-6 6" stroke-width="1.500"/>
<path d="M979.500 64.500h10l-3.800 5.500v6l-2.400-1.500v-4.500z"/><path d="M995 68.500l3 3l3-3"/>
<path d="M1016 66.500h8.500v3.500h-8.500zM1017 70v6h6.500v-6M1019 72.500h2.500" stroke="#d0d0d0"/><circle cx="1026" cy="66" r="3.900" fill="#4c4c4c" stroke="none"/><circle cx="1026" cy="66" r="3.300" fill="#f4f4f4" stroke="none"/><path d="M1023.800 66h4.400M1026 63.800v4.400" stroke="#333" stroke-width="1.100"/>
<!-- row icons -->
<path d="M704 89h11v3.500h-11zM705 93v7.500h9v-7.500z" fill="#e0e0e0" stroke="none"/><path d="M708 95.500h3" stroke="#3a3a3a" stroke-width="1.200"/>
<path d="M706 112l5.500 0l-2.750 5z" fill="#d0d0d0" stroke="none"/>
<path d="M723 108.500h13v4h-13zM724 113v8h11v-8z" fill="#e6e6e6" stroke="none"/><path d="M727.500 116h4" stroke="#282828" stroke-width="1.300"/>
<path d="M726 131l0 6l5-3z" fill="#d0d0d0" stroke="none"/><path d="M726 151.500l0 6l5-3z" fill="#d0d0d0" stroke="none"/>
<path d="M743.500 129l10.500 0l-5.250 10.500z" stroke="#e48a4a" stroke-width="2.200" stroke-linejoin="round"/>
<path d="M743.500 149l10.500 0l-5.250 10.500z" stroke="#e48a4a" stroke-width="2.200" stroke-linejoin="round"/>
<g stroke="#2fd3a3" stroke-width="1.100"><path d="M850.500 129.500h9.500l-4.700 9zM850.500 129.500l4.800 9"/><rect x="849" y="128" width="2.600" height="2.600" fill="#2c5f8a"/><rect x="858.500" y="128" width="2.600" height="2.600" fill="#2c5f8a"/><rect x="854" y="137.500" width="2.600" height="2.600" fill="#2c5f8a"/></g>
<g stroke="#2fd3a3" stroke-width="1.100"><path d="M855 149.500h9.500l-4.700 9z"/><rect x="853.500" y="148" width="2.600" height="2.600" fill="#282828"/><rect x="863" y="148" width="2.600" height="2.600" fill="#282828"/><rect x="858.500" y="157.500" width="2.600" height="2.600" fill="#282828"/></g>
<!-- edit mode icon -->
<path d="M684.500 129.500h10v9h-10z" stroke="#d8d8d8" stroke-width="1"/><rect x="683" y="128" width="3" height="3" fill="#334c7e" stroke="#d8d8d8" stroke-width="0.900"/><rect x="683" y="137" width="3" height="3" fill="#334c7e" stroke="#d8d8d8" stroke-width="0.900"/><rect x="693" y="137" width="3" height="3" fill="#334c7e" stroke="#d8d8d8" stroke-width="0.900"/><rect x="692.500" y="127.500" width="4" height="4" fill="#fff" stroke="none"/>
<!-- right icons -->
<rect x="976" y="108.500" width="10.500" height="10.500" rx="1.500" fill="#e6e6e6" stroke="none"/><path d="M978.300 114l2.500 2.500l4-5" stroke="#222" stroke-width="1.500"/>
<defs><g id="eye"><path d="M994.500 114.500q7-8.500 14 0q-7 8.500-14 0z" fill="#e6e6e6" stroke="none"/><circle cx="1001.500" cy="114.500" r="3.200" fill="currentColor" stroke="none"/><circle cx="1001.500" cy="114.500" r="1.700" fill="#e6e6e6" stroke="none"/></g>
<g id="cam"><path d="M1015 111.500h3l1-2h5l1 2h3.500v8.500h-13.500z" fill="#e6e6e6" stroke="none"/><circle cx="1021.700" cy="115.500" r="3.300" fill="currentColor" stroke="none"/><circle cx="1021.700" cy="115.500" r="1.900" fill="#e6e6e6" stroke="none"/></g></defs>
<g style="color:#282828" transform="translate(0 -0.800)"><use href="#eye"/><use href="#cam"/><use href="#eye" y="40"/><use href="#cam" y="40"/></g><g style="color:#334c7e" transform="translate(0 -0.800)"><use href="#eye" y="20"/><use href="#cam" y="20"/></g>
</svg>
</div></div>
<!-- PROPERTIES -->
<div class="abs" id="props"><div class="abs" style="left:-679px;top:-252px;width:1040px;height:675px">
<div class="abs" style="left:679px;top:252px;width:360px;height:25px;background:#2f2f2f"></div>
<div class="abs" style="left:679px;top:277px;width:28px;height:377px;background:#1e1e1e"></div>
<div class="abs" style="left:682px;top:620px;width:25px;height:25px;background:#303030;border-radius:4px 0 0 4px"></div>
<div class="fld" style="left:687.500px;top:254.500px;width:31px;height:19.500px;background:#232323"></div>
<div class="fld" style="left:805px;top:254px;width:110px;height:20px;background:#1d1d1d"></div>
<div class="fld" style="left:1011px;top:254px;width:20px;height:20px;background:#232323"></div>
<div class="t" style="left:741px;top:288px;color:#e0e0e0">Action_Cube</div>
<!-- list -->
<div class="abs" style="left:715px;top:321px;width:288px;height:80px;background:#1f1f1f;border:1px solid #3a3a3a;border-radius:4px"></div>
<div class="abs" style="left:721px;top:327px;width:276px;height:18px;background:#47474a;border-radius:3px"></div>
<div class="abs" style="left:1011px;top:321px;width:19px;height:19px;background:#545454;border-radius:3px 3px 0 0"></div>
<div class="abs" style="left:1011px;top:341px;width:19px;height:19px;background:#545454;border-radius:0 0 3px 3px"></div>
<div class="fld" style="left:1011px;top:368px;width:20px;height:19px;background:#232323"></div>
<!-- buttons -->
<div class="abs" style="left:715px;top:406px;width:315px;height:18px;background:#545454;border-radius:3px"></div>
<div class="abs" style="left:819px;top:406px;width:1px;height:18px;background:#3a3a3a"></div>
<div class="abs" style="left:924px;top:406px;width:1px;height:18px;background:#3a3a3a"></div>
<div class="t cj" style="left:715px;top:408px;width:104px;text-align:center;color:#e8e8e8">指派</div>
<div class="t cj" style="left:820px;top:408px;width:104px;text-align:center;color:#e8e8e8">選取</div>
<div class="t cj" style="left:925px;top:408px;width:105px;text-align:center;color:#e8e8e8">取消選取</div>
<div class="fld" style="left:715px;top:431px;width:31px;height:20px;background:#232323;border-radius:4px 0 0 4px"></div>
<div class="abs" style="left:746px;top:432px;width:244px;height:18px;background:#545454;border-radius:0 3px 3px 0"></div>
<div class="t cj" style="left:746px;top:434px;width:262px;text-align:center;color:#e8e8e8">新增</div>
<div class="fld" style="left:1001px;top:431px;width:30px;height:20px;background:#232323"></div>
<svg style="left:0;top:0" width="1040" height="675" viewBox="0 0 1040 675" fill="none" stroke="#e0e0e0" stroke-width="1.100">
<!-- header icons -->
<rect x="692" y="257.200" width="13.600" height="5.800" rx="2.900" fill="#e6e6e6" stroke="none"/><rect x="692" y="265.300" width="13.600" height="5.800" rx="2.900" fill="#e6e6e6" stroke="none"/><rect x="698.300" y="258.300" width="6.300" height="3.600" rx="1.800" fill="#232323" stroke="none"/><rect x="700.800" y="266.400" width="3.800" height="3.600" rx="1.800" fill="#232323" stroke="none"/><path d="M709 262.500l3 3l3-3"/>
<circle cx="819.500" cy="261.500" r="4.300" stroke-width="1.300"/><path d="M816.500 265l-6 6" stroke-width="1.500"/>
<path d="M1018 263l3 3l3-3"/>
<!-- breadcrumb icon -->
<path d="M719 292v-3h3M728 289h3v3M731 298v3h-3M722 301h-3v-3" stroke="#d0d0d0"/><rect x="721.500" y="291.500" width="7" height="7" fill="#e6e6e6" stroke="none"/>
<g transform="translate(1022.700 295) rotate(45)" stroke="#b8b8b8" stroke-width="1.100"><path d="M-3 -5.500h6v1.500l-1.200 1v4l2.700 2.200v1.300h-9v-1.300l2.700-2.200v-4l-1.200-1z"/><path d="M0 4.500v5.500"/></g>
<!-- material icon in slot -->
<g id="mat"><circle cx="730" cy="336" r="6.600" fill="#e8e8e8" stroke="none"/><path d="M730 336v-6.600a6.600 6.600 0 0 1 6.600 6.600zM730 336v6.600a6.600 6.600 0 0 1-6.600-6.600z" fill="#222" stroke="none"/><circle cx="730" cy="336" r="6.600" stroke="#e8e8e8" stroke-width="1.200"/></g>
<use href="#mat" x="-3.500" y="105"/>
<path d="M738 440.500l2.200 2.200l2.200-2.200" stroke-width="1"/>
<path d="M1016.500 330.500h9M1021 326v9" stroke="#f0f0f0" stroke-width="1.200"/>
<path d="M1016.500 350.500h9" stroke="#f0f0f0" stroke-width="1.200"/>
<path d="M1017.500 376l3.500 3.500l3.500-3.500"/>
<path d="M727 388l0 5l4.500-2.500z" fill="#c0c0c0" stroke="none"/>
<path d="M864 389.500h1M866.700 389.500h1M869.400 389.500h1M872.100 389.500h1M864 392h1M866.700 392h1M869.400 392h1M872.100 392h1" stroke="#b0b0b0" stroke-width="1"/>
<path d="M754 441h9M758.500 436.500v9" stroke="#f0f0f0" stroke-width="1.200"/>
<g stroke="#e0e0e0" stroke-width="1.100"><path d="M1007 436.500h8.500l-4.200 9z"/><rect x="1005.500" y="435" width="2.600" height="2.600" fill="#232323"/><rect x="1014.500" y="435" width="2.600" height="2.600" fill="#232323"/><rect x="1010" y="444.500" width="2.600" height="2.600" fill="#232323"/></g>
<path d="M1021.500 439.500l2.500 2.500l2.500-2.500"/>
<!-- tab icons, centre x=694 -->
<path d="M689.500 277v3M697.500 277v7" stroke="#cfcfcf" stroke-width="1.800"/><ellipse cx="689.500" cy="283.500" rx="2.600" ry="3.200" fill="#cfcfcf" stroke="none"/><path d="M695 277.500h5" stroke="#cfcfcf" stroke-width="1.600"/><circle cx="697.500" cy="285.500" r="1.700" fill="#cfcfcf" stroke="none"/>
<!-- render -->
<path d="M687.500 311h10.500v10h-10.500zM698 313.500h2.500v5h-2.500z" stroke="#d8d8d8"/><path d="M690 309.500h5" stroke="#d8d8d8"/><path d="M689.500 314h6.500M689.500 316h6.500M689.500 318h6.500" stroke="#d8d8d8" stroke-width="0.900"/>
<!-- output -->
<path d="M687.500 338h13v4.500h-13z" fill="#d8d8d8" stroke="none"/><path d="M689.500 343v7h9v-7" stroke="#d8d8d8"/><path d="M691 349l2-3l1.500 1.500l1.500-1.500l1.500 3z" fill="#d8d8d8" stroke="none"/>
<!-- view layer -->
<path d="M687.500 369v9.500h10M689.700 367v9.300h10" stroke="#d8d8d8" stroke-width="1"/><rect x="692" y="364.800" width="9.500" height="9.200" fill="#1e1e1e" stroke="#d8d8d8" stroke-width="1.200"/><path d="M692.700 373.300l2.800-4l2 2.400l1.200-1.200l2.200 2.800z" fill="#d8d8d8" stroke="none"/>
<!-- scene -->
<g transform="translate(0 -2.500)"><path d="M687.500 405c0-3 2-6 3.500-9c1.500 3 3 6 3 9z" fill="#d8d8d8" stroke="none"/><circle cx="697" cy="402" r="3.200" stroke="#d8d8d8"/></g>
<!-- world -->
<g transform="translate(0 -1.500)"><circle cx="694" cy="428" r="6.300" stroke="#c9505f" stroke-width="1.300"/><path d="M689.500 424q3 1 3.500 3.500t4 2.500q2 0 3-2M691 432.500q2-2 4-1.500" stroke="#c9505f" stroke-width="1.200"/></g>
<!-- object -->
<rect x="690.500" y="460.500" width="7.500" height="7.500" fill="#e7913f" stroke="none"/><path d="M687.500 460v-3h3M698 457h3v3M701 468.500v3h-3M690.500 471.500h-3v-3" stroke="#e7913f" stroke-width="1.100"/>
<!-- modifier wrench -->
<path d="M689 498l6-6" stroke="#5b8fe0" stroke-width="2.600" stroke-linecap="round"/><path d="M699.800 486.200a4.200 4.200 0 1 0 1.800 3.800l-3 1.200l-1.800-1.800z" fill="#5b8fe0" stroke="none"/>
<!-- particles -->
<path d="M689.500 515.500V525M689.500 515.500H699M699 515.500V522" stroke="#5b8fe0" stroke-width="1.100"/><circle cx="689.500" cy="515.500" r="1.800" fill="#5b8fe0" stroke="none"/><circle cx="699" cy="515.500" r="1.800" fill="#5b8fe0" stroke="none"/><circle cx="689.500" cy="525" r="1.800" fill="#5b8fe0" stroke="none"/><circle cx="699" cy="524" r="1.500" fill="#5b8fe0" stroke="none"/>
<!-- physics -->
<circle cx="694.500" cy="548" r="6" stroke="#5b8fe0" stroke-width="1.200"/><circle cx="694.500" cy="548" r="2.300" fill="#5b8fe0" stroke="none"/><path d="M688 542q-2 6 0 12" stroke="#5b8fe0" stroke-width="1"/>
<!-- constraints -->
<circle cx="693.500" cy="578" r="4" stroke="#5b8fe0" stroke-width="1.300"/><circle cx="693.500" cy="578" r="1.500" fill="#5b8fe0" stroke="none"/><path d="M689 575q4-5 11-3q2 2-1 4" stroke="#5b8fe0" stroke-width="1.300"/>
<!-- data -->
<g stroke="#2fd3a3" stroke-width="1.100"><path d="M689 598.500h10l-5 9.500z"/><rect x="687.500" y="597" width="2.600" height="2.600" fill="#1e1e1e"/><rect x="697.500" y="597" width="2.600" height="2.600" fill="#1e1e1e"/><rect x="692.700" y="606.500" width="2.600" height="2.600" fill="#1e1e1e"/></g>
<!-- material (active) -->
<circle cx="694" cy="632" r="6" fill="#e0606a" stroke="none"/><path d="M694 632v-6a6 6 0 0 1 6 6zM694 632v6a6 6 0 0 1-6-6z" fill="#303030" stroke="none"/><circle cx="694" cy="632" r="6" stroke="#e0606a" stroke-width="1.200"/>

</svg>
</div></div>
<!-- RED ANNOTATIONS -->
<svg style="left:0;top:0" width="1040" height="675" viewBox="0 0 1040 675" fill="none" stroke="#e3191c" stroke-width="4" stroke-linejoin="miter">
<rect x="1006.500" y="316" width="28" height="30"/>
<rect x="737.500" y="425.500" width="259" height="30.500"/>
<rect x="673.500" y="611.500" width="41" height="40"/>
<path d="M691.5 594.0C692.2 592.3 694.4 587.3 695.5 584.0C696.6 580.7 697.2 579.2 698.0 574.0C698.8 568.8 700.5 560.7 700.0 553.0C699.5 545.3 697.4 537.3 695.0 528.0C692.6 518.7 687.9 507.5 685.5 497.0C683.1 486.5 681.6 474.5 680.5 465.0C679.4 455.5 679.1 446.7 679.0 440.0C678.9 433.3 679.2 428.9 680.0 425.0C680.8 421.1 681.2 421.6 684.0 416.6C686.8 411.6 691.4 401.5 696.7 395.0C702.0 388.5 708.6 382.7 716.0 377.4C723.4 372.1 730.9 367.4 741.0 363.0C751.1 358.6 762.0 354.1 776.8 350.7C791.6 347.3 812.2 344.4 830.0 342.6C847.8 340.8 859.3 340.8 883.5 340.0C907.7 339.2 959.8 338.0 975.0 337.6" stroke-width="4.200" stroke-linecap="round"/>
<path d="M997.500 337.500l-26-10.700v21.400z" fill="#e3191c" stroke="none"/>
<path d="M1017 348L985 399" stroke-width="4.500"/>
<path d="M971 423l4-29l17.500 11z" fill="#e3191c" stroke="none"/>
</svg>
</body></html>
